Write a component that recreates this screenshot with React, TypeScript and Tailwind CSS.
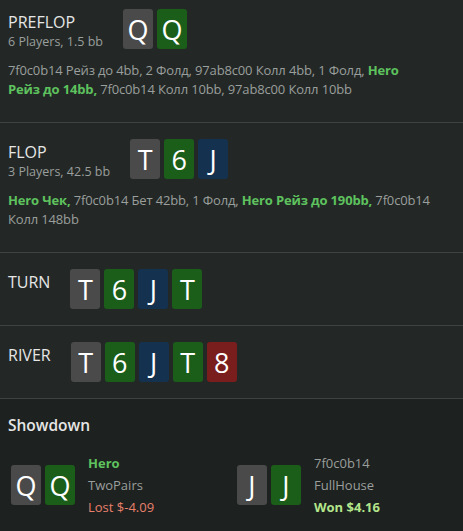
import React from 'react';

type Card = { rank: string; color: 'gray' | 'green' | 'blue' | 'red' };

const cardBg: Record<Card['color'], string> = {
  gray: 'bg-[#4a4a4a]',
  green: 'bg-[#1a5e1a]',
  blue: 'bg-[#14324f]',
  red: 'bg-[#7a1d1d]',
};

function Cards({ cards }: { cards: Card[] }) {
  return (
    <div className="flex gap-1">
      {cards.map((c, i) => (
        <div
          key={i}
          className={`${cardBg[c.color]} w-[30px] h-10 rounded-[3px] flex items-center justify-center text-white text-[27px] leading-none`}
        >
          {c.rank}
        </div>
      ))}
    </div>
  );
}

type Part = { text: string; hero?: boolean };

function Street({
  title,
  sub,
  cards,
  actions,
  first,
}: {
  title: string;
  sub?: string;
  cards: Card[];
  actions?: Part[];
  first?: boolean;
}) {
  return (
    <section className={`border-b border-[#3e4341] px-2 ${first ? 'pt-[9px]' : 'pt-4'} ${actions ? 'pb-[23px]' : 'pb-4'}`}>
      <div className="flex items-start gap-5">
        <div className="pt-[3px]">
          <div className="text-[#e6e6e6] text-base leading-5">{title}</div>
          {sub && <div className="text-[#9a9e9c] text-[12.5px] leading-5">{sub}</div>}
        </div>
        <Cards cards={cards} />
      </div>
      {actions && (
        <p className="mt-[9px] pr-[24px] text-[13px] leading-[19px] tracking-[-0.15px] text-[#9a9e9c]">
          {actions.map((p, i) =>
            p.hero ? (
              <span key={i} className="font-bold text-[#5ec25e]">{p.text}</span>
            ) : (
              <span key={i}>{p.text}</span>
            )
          )}
        </p>
      )}
    </section>
  );
}

function Player({ cards, name, hand, result, won }: { cards: Card[]; name: string; hand: string; result: string; won?: boolean }) {
  return (
    <div className="flex items-center gap-[13px]">
      <Cards cards={cards} />
      <div className="text-[13px] leading-[22px]">
        <div className={won ? 'text-[#9a9e9c]' : 'font-bold text-[#5ec25e]'}>{name}</div>
        <div className="text-[#9a9e9c]">{hand}</div>
        <div className={won ? 'font-bold text-[#b4e68c]' : 'text-[#e8806c]'}>{result}</div>
      </div>
    </div>
  );
}

export default function App() {
  const board: Card[] = [
    { rank: 'T', color: 'gray' },
    { rank: '6', color: 'green' },
    { rank: 'J', color: 'blue' },
    { rank: 'T', color: 'green' },
    { rank: '8', color: 'red' },
  ];
  return (
    <div className="w-[463px] h-[531px] overflow-hidden bg-[#232826]" style={{ fontFamily: '"Open Sans", "Noto Sans", sans-serif' }}>
      <Street
        first
        title="PREFLOP"
        sub="6 Players, 1.5 bb"
        cards={[{ rank: 'Q', color: 'gray' }, { rank: 'Q', color: 'green' }]}
        actions={[
          { text: '7f0c0b14 Рейз до 4bb, 2 Фолд, 97ab8c00 Колл 4bb, 1 Фолд, ' },
          { text: 'Hero', hero: true },
          { text: ' ' },
          { text: 'Рейз до 14bb,', hero: true },
          { text: ' 7f0c0b14 Колл 10bb, 97ab8c00 Колл 10bb' },
        ]}
      />
      <Street
        title="FLOP"
        sub="3 Players, 42.5 bb"
        cards={board.slice(0, 3)}
        actions={[
          { text: 'Hero Чек,', hero: true },
          { text: ' 7f0c0b14 Бет 42bb, 1 Фолд, ' },
          { text: 'Hero Рейз до 190bb,', hero: true },
          { text: ' 7f0c0b14' },
          { text: ' Колл 148bb' },
        ]}
      />
      <Street title="TURN" cards={board.slice(0, 4)} />
      <Street title="RIVER" cards={board} />
      <section className="bg-[#1d211f] pt-4 h-full">
        <div className="px-2 text-[15.5px] leading-5 font-semibold text-[#e6e6e6]">Showdown</div>
        <div className="grid grid-cols-2 pl-[11px] mt-[17px]">
          <Player
            cards={[{ rank: 'Q', color: 'gray' }, { rank: 'Q', color: 'green' }]}
            name="Hero"
            hand="TwoPairs"
            result="Lost $-4.09"
          />
          <Player
            cards={[{ rank: 'J', color: 'gray' }, { rank: 'J', color: 'green' }]}
            name="7f0c0b14"
            hand="FullHouse"
            result="Won $4.16"
            won
          />
        </div>
      </section>
    </div>
  );
}
